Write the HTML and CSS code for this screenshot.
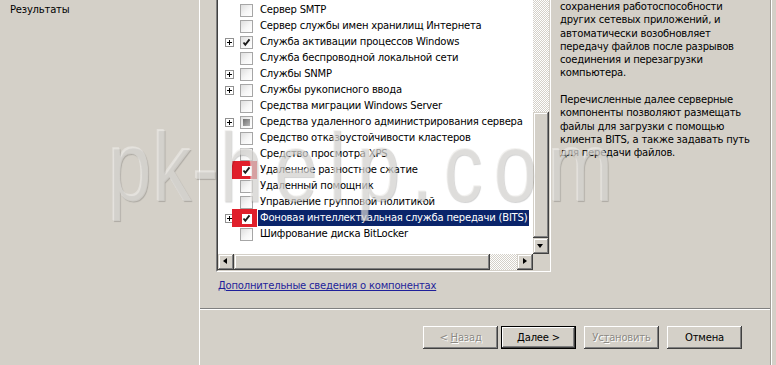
FILE: index.html
```html
<!DOCTYPE html>
<html lang="ru">
<head>
<meta charset="utf-8">
<title>Мастер добавления компонентов</title>
<link rel="stylesheet" href="styles.css">
</head>
<body>
<div class="window">
  <nav class="nav">
    <div class="nav-item">Результаты</div>
  </nav>
  <main class="main">
    <div class="content">
      <section class="left">
        <div class="list">
          <div class="list-inner">
            <div class="list-body">
              <div class="rows">
                <div class="row"><span class="exp none"></span><span class="cb"></span><span class="lbl">Сервер SMTP</span></div>
                <div class="row"><span class="exp none"></span><span class="cb"></span><span class="lbl">Сервер службы имен хранилищ Интернета</span></div>
                <div class="row"><span class="exp"></span><span class="cb"><svg viewBox="0 0 11 11"><path d="M2.5 5.5 L4.3 7.8 L8.5 2.3"/></svg></span><span class="lbl">Служба активации процессов Windows</span></div>
                <div class="row"><span class="exp none"></span><span class="cb"></span><span class="lbl">Служба беспроводной локальной сети</span></div>
                <div class="row"><span class="exp"></span><span class="cb"></span><span class="lbl">Службы SNMP</span></div>
                <div class="row"><span class="exp"></span><span class="cb"></span><span class="lbl">Службы рукописного ввода</span></div>
                <div class="row"><span class="exp none"></span><span class="cb"></span><span class="lbl">Средства миграции Windows Server</span></div>
                <div class="row"><span class="exp"></span><span class="cb ind"></span><span class="lbl">Средства удаленного администрирования сервера</span></div>
                <div class="row"><span class="exp none"></span><span class="cb"></span><span class="lbl">Средство отказоустойчивости кластеров</span></div>
                <div class="row"><span class="exp none"></span><span class="cb"></span><span class="lbl">Средство просмотра XPS</span></div>
                <div class="row"><span class="exp none"></span><span class="cb mark"><svg viewBox="0 0 11 11"><path d="M2.5 5.5 L4.3 7.8 L8.5 2.3"/></svg></span><span class="lbl">Удаленное разностное сжатие</span></div>
                <div class="row"><span class="exp none"></span><span class="cb"></span><span class="lbl">Удаленный помощник</span></div>
                <div class="row"><span class="exp none"></span><span class="cb"></span><span class="lbl">Управление групповой политикой</span></div>
                <div class="row"><span class="exp"></span><span class="cb mark"><svg viewBox="0 0 11 11"><path d="M2.5 5.5 L4.3 7.8 L8.5 2.3"/></svg></span><span class="lbl sel">Фоновая интеллектуальная служба передачи (BITS)</span></div>
                <div class="row"><span class="exp none"></span><span class="cb"></span><span class="lbl">Шифрование диска BitLocker</span></div>
              </div>
              <div class="vscroll">
                <div class="track"></div>
                <div class="thumb-v raised"></div>
                <div class="arrow raised"><span class="tri-down"></span></div>
              </div>
            </div>
            <div class="hscroll">
              <div class="arrow raised"><span class="tri-left"></span></div>
              <div class="thumb-h raised"></div>
              <div class="track"></div>
              <div class="arrow raised"><span class="tri-right"></span></div>
              <div class="corner"></div>
            </div>
          </div>
        </div>
        <a class="more" href="#">Дополнительные сведения о компонентах</a>
      </section>
      <section class="info">
        <p>сохранения работоспособности<br>других сетевых приложений, и<br>автоматически возобновляет<br>передачу файлов после разрывов<br>соединения и перезагрузки<br>компьютера.</p>
        <p>Перечисленные далее серверные<br>компоненты позволяют размещать<br>файлы для загрузки с помощью<br>клиента BITS, а также задавать путь<br>для передачи файлов.</p>
      </section>
    </div>
    <div class="sep"></div>
    <div class="buttons">
      <button class="btn disabled b-back">&lt; <u>Н</u>азад</button>
      <button class="btn default b-next"><u>Д</u>алее &gt;</button>
      <button class="btn disabled b-inst">Ус<u>т</u>ановить</button>
      <button class="btn b-cancel">Отмена</button>
    </div>
  </main>
  <div class="edge"></div>
  <div class="wm"><span class="wm-a">pk-</span>help.com</div>
</div>
</body>
</html>
```

FILE: styles.css
```css
*, *::before, *::after { box-sizing: border-box; }

body {
  margin: 0;
  background: #d4d0c8;
  font-family: "DejaVu Sans", "Liberation Sans", sans-serif;
  font-size: 10px;
  line-height: 13px;
  letter-spacing: -0.2px;
  color: #000;
  overflow: hidden;
}

.window {
  position: relative;
  display: flex;
  width: 776px;
  height: 365px;
  overflow: hidden;
}

.nav {
  width: 200px;
  border-right: 1px solid #fff;
  padding: 3px 0 0 10px;
}

.main {
  width: 570px;
  display: flex;
  flex-direction: column;
}

.edge {
  width: 6px;
  border-left: 1px solid #a19e97;
  box-shadow: inset 1px 0 #fff;
}

.content {
  display: flex;
  height: 308px;
}

.left {
  width: 351px;
  padding-left: 16px;
}

.list {
  width: 335px;
  height: 272px;
  border-left: 1px solid #808080;
  border-right: 1px solid #fff;
  border-bottom: 1px solid #fff;
}

.list-inner {
  height: 271px;
  border-left: 1px solid #404040;
  border-right: 1px solid #d4d0c8;
  border-bottom: 1px solid #d4d0c8;
  background: #fff;
  display: flex;
  flex-direction: column;
}

.list-body {
  height: 254px;
  display: flex;
}

.rows {
  flex: 1;
  padding-top: 2px;
}

.row {
  height: 16px;
  display: flex;
  align-items: center;
  padding-left: 7px;
  white-space: nowrap;
}

.exp {
  position: relative;
  flex: none;
  width: 9px;
  height: 9px;
  margin-right: 6px;
  border: 1px solid #919191;
  background: #fff;
}
.exp::before,
.exp::after {
  content: "";
  position: absolute;
  background: #000;
}
.exp::before { left: 1px; top: 3px; width: 5px; height: 1px; }
.exp::after { left: 3px; top: 1px; width: 1px; height: 5px; }
.exp.none { border: 0; background: none; }
.exp.none::before, .exp.none::after { display: none; }

.cb {
  position: relative;
  flex: none;
  width: 13px;
  height: 13px;
  margin-right: 5px;
  border: 1px solid #a6a6a6;
  background: linear-gradient(135deg, #dedede 0%, #f6f6f6 55%, #fff 100%);
}
.cb svg {
  position: absolute;
  left: 0;
  top: 0;
  width: 11px;
  height: 11px;
  fill: none;
  stroke: #1d1d1d;
  stroke-width: 1.9;
}
.cb.ind::after {
  content: "";
  position: absolute;
  left: 2px;
  top: 2px;
  width: 7px;
  height: 7px;
  background: linear-gradient(135deg, #6e6e6e, #b9b9b9);
}
.cb.mark {
  z-index: 2;
  background: #fff;
}
.cb.mark::before {
  content: "";
  position: absolute;
  left: -9px;
  top: -4px;
  width: 25px;
  height: 18px;
  border: solid #e01f2b;
  border-width: 5px 5px 3px 10px;
}

.lbl {
  padding: 0 2px;
  line-height: 16px;
}
.lbl.sel {
  background: #0a246a;
  color: #fff;
}

.raised {
  background: #d4d0c8;
  box-shadow: inset -1px -1px #404040, inset 1px 1px #d4d0c8, inset -2px -2px #808080, inset 2px 2px #fff;
}

.track {
  background: repeating-conic-gradient(#fff 0 25%, #d4d0c8 0 50%) 0 0 / 2px 2px;
}

.vscroll {
  width: 16px;
  display: flex;
  flex-direction: column;
}
.vscroll .track { flex: 1; }
.thumb-v { height: 126px; }

.arrow {
  position: relative;
  width: 16px;
  height: 16px;
  flex: none;
}
.tri-down, .tri-left, .tri-right {
  position: absolute;
  width: 0;
  height: 0;
}
.tri-down {
  left: 4px;
  top: 6px;
  border-left: 3.5px solid transparent;
  border-right: 3.5px solid transparent;
  border-top: 4px solid #000;
}
.tri-left {
  left: 5px;
  top: 4px;
  border-top: 3.5px solid transparent;
  border-bottom: 3.5px solid transparent;
  border-right: 4px solid #000;
}
.tri-right {
  left: 6px;
  top: 4px;
  border-top: 3.5px solid transparent;
  border-bottom: 3.5px solid transparent;
  border-left: 4px solid #000;
}

.hscroll {
  height: 16px;
  display: flex;
}
.thumb-h { width: 256px; }
.hscroll .track { flex: 1; }
.corner {
  width: 16px;
  background: #d4d0c8;
}

.more {
  display: inline-block;
  margin: 7px 0 0 2px;
  color: #1f1f9a;
  text-decoration: underline;
}

.info {
  flex: 1;
  padding-left: 9px;
}
.info p {
  margin: 0 0 13.3px;
  line-height: 13.3px;
  white-space: nowrap;
}

.sep {
  height: 2px;
  border-top: 1px solid #808080;
  border-bottom: 1px solid #fff;
}

.buttons {
  display: flex;
  justify-content: flex-end;
  padding: 16px 28px 0 0;
}

.btn {
  width: 75px;
  height: 23px;
  padding: 0;
  margin-left: 8px;
  border: 0;
  background: #d4d0c8;
  font-family: inherit;
  font-size: 10px;
  letter-spacing: -0.2px;
  color: #000;
  box-shadow: inset -1px -1px #404040, inset 1px 1px #fff, inset -2px -2px #808080, inset 2px 2px #d4d0c8;
}
.btn.b-next { margin-left: 3px; }
.btn.default {
  box-shadow: inset 0 0 0 1px #000, inset -2px -2px #404040, inset 2px 2px #fff, inset -3px -3px #808080;
}
.btn.disabled {
  color: #8c8a85;
  text-shadow: 1px 1px #fff;
}

.wm {
  position: absolute;
  z-index: 5;
  left: 108px;
  top: 118px;
  font-family: "Liberation Sans", sans-serif;
  font-size: 98px;
  line-height: 98px;
  letter-spacing: 13.5px;
  white-space: nowrap;
  transform: scaleX(0.8);
  transform-origin: 0 0;
  color: rgba(236, 234, 230, 0.5);
  text-shadow: 1px 1px 1px rgba(0, 0, 0, 0.18), -1px -1px 0 rgba(255, 255, 255, 0.35);
  pointer-events: none;
}
.wm-a {
  letter-spacing: 1px;
}
```
